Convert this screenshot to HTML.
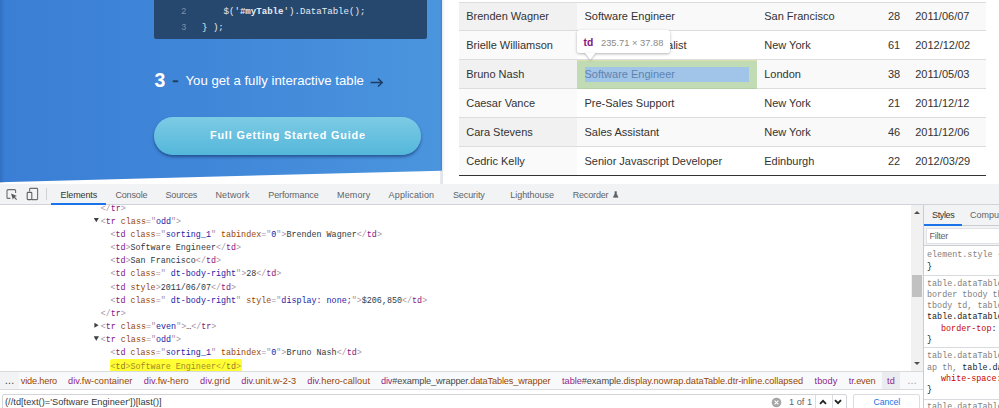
<!DOCTYPE html>
<html lang="en">
<head>
<meta charset="utf-8">
<title>DataTables - DevTools</title>
<style>
*{box-sizing:border-box;margin:0;padding:0}
html,body{width:999px;height:408px;overflow:hidden;background:#fff}
body{position:relative;font-family:"Liberation Sans",sans-serif;color:#333;-webkit-font-smoothing:antialiased}
.abs{position:absolute}
.t{position:absolute;white-space:nowrap;line-height:1}

/* ---------- page (top) ---------- */
#page{position:absolute;left:0;top:0;width:999px;height:184px;overflow:hidden;background:#fff}
#hero{position:absolute;left:0;top:0;width:442px;height:184px;
  background:linear-gradient(90deg,#3a7fd5 0%,#3f85d8 40%,#4b95de 100%);
  clip-path:polygon(0 0,442px 0,442px 170.7px,0 182.2px)}
#heroshadow{position:absolute;left:442px;top:0;width:3px;height:171px;background:linear-gradient(90deg,#e6e9ee 0%,#fff 100%)}
#code{position:absolute;left:154px;top:-10px;width:272.5px;height:49.3px;background:#26486f;border-radius:2px}
.mono{font-family:"Liberation Mono","DejaVu Sans Mono",monospace}
.cl{position:absolute;white-space:pre;font-size:9.1px;line-height:1;color:#e6ebf1}
.ln{color:#7d8fa6}

#step3{left:154.5px;top:71.2px;font-size:19.5px;font-weight:bold;color:#fff}
#dash{left:172.2px;top:70.9px;font-size:19.5px;color:#1d3d66;-webkit-text-stroke:.35px #1d3d66}
#steptxt{left:185.5px;top:73.8px;font-size:13.2px;color:#fff}
#arrow{left:370px;top:76.2px}

#btn{position:absolute;left:154.3px;top:117px;width:267.2px;height:37.5px;border-radius:19px;
  background:linear-gradient(180deg,#7dcbe5 0%,#54b7d9 100%);
  box-shadow:0 2px 3px rgba(15,40,90,.55)}
#btn span{position:absolute;left:0;right:0;top:13px;text-align:center;color:#fff;font-weight:bold;font-size:10.8px;letter-spacing:.85px;line-height:1}

/* table */
#tbl{position:absolute;left:458.5px;top:0;width:527px;height:184px}
.row{position:absolute;left:0;width:527px;height:29px;border-top:1px solid #dddddd}
.row.odd{background:#f9f9f9}
.row.even{background:#fff}
.row .c1{position:absolute;left:0;top:0;width:118px;height:100%}
.row.odd .c1{background:#f1f1f1}
.row.even .c1{background:#fafafa}
.row span{position:absolute;top:9px;font-size:11px;line-height:1;white-space:nowrap;color:#333}
.row.r1 span{top:8px}
.row .a{left:7.7px}.row .b{left:126px}.row .c{left:305.7px}.row .d{right:85.3px}.row .e{left:456.7px}
#tblbot{position:absolute;left:458.5px;top:175px;width:527.5px;height:1px;background:#333}

/* inspect overlay */
#hl{position:absolute;left:577px;top:60.2px;width:180px;height:28.7px;background:rgba(147,196,125,.55)}
#hlc{position:absolute;left:584.5px;top:67px;width:164.5px;height:15.3px;background:#a0c5e8}
#hlt{left:584.5px;top:69px;font-size:11px;color:#5f83b0}
#hlb{position:absolute;left:577px;top:60px;width:180px;height:.8px;background:rgba(255,229,153,.4)}
#tip{position:absolute;left:576.5px;top:30.2px;width:93.2px;height:22.4px;background:#fff;border-radius:2.5px;box-shadow:0 1px 3px rgba(0,0,0,.3)}
#tiparrow{position:absolute;left:584.8px;top:52.4px;width:11px;height:7.4px;filter:drop-shadow(0 1px 1.2px rgba(0,0,0,.28))}
#tiparrow i{display:block;width:100%;height:100%;background:#fff;clip-path:polygon(0 0,100% 0,50% 100%)}
#tip .tg{left:7px;top:8.3px;font-size:10.3px;font-weight:bold;color:#881280}
#tip .dm{left:24.5px;top:8.6px;font-size:9.3px;color:#8a8a8a}

/* ---------- devtools ---------- */
#dt{position:absolute;left:0;top:184.3px;width:999px;height:224px;background:#fff}
#tabs{position:absolute;left:0;top:0;width:999px;height:20.3px;background:#f1f3f4;border-bottom:1px solid #d0d3d7}
#tabs .tb{position:absolute;top:6.3px;font-size:9px;line-height:1;color:#5f6368;white-space:nowrap}
#tabs .tb.sel{color:#333}
#tabsel{position:absolute;left:51px;top:19px;width:55px;height:1.7px;background:#1a73e8}
#tabdiv{position:absolute;left:46px;top:4px;width:1px;height:12px;background:#cfd1d4}

#dom{position:absolute;left:0;top:20.3px;width:911px;height:166.4px;overflow:hidden;background:#fff}
.dl{position:absolute;white-space:pre;font-family:"Liberation Mono","DejaVu Sans Mono",monospace;font-size:8.38px;line-height:13.175px;height:13.175px;color:#303942}
.tg{color:#881280}.an{color:#994500}.av{color:#1a1aa6}.pu{color:#a894a6}
.tri{position:absolute;background:#3c4043}
.tri.dn{width:5.4px;height:4.4px;clip-path:polygon(0 0,100% 0,50% 100%)}
.tri.rt{width:4.2px;height:5.2px;clip-path:polygon(0 0,100% 50%,0 100%)}

#sb{position:absolute;left:910.6px;top:20.3px;width:12.6px;height:166.2px;background:#f1f1f1}
#sbthumb{position:absolute;left:1.6px;top:70.2px;width:9.6px;height:22px;background:#c1c1c1}
#sb .au{position:absolute;left:3.3px;top:6px;width:0;height:0;border-left:3px solid transparent;border-right:3px solid transparent;border-bottom:3.4px solid #505050}
#sb .ad{position:absolute;left:3.3px;top:157.6px;width:0;height:0;border-left:3px solid transparent;border-right:3px solid transparent;border-top:3.4px solid #505050}

#crumbs{position:absolute;left:0;top:186.4px;width:923.6px;height:19.6px;background:#f8f9fa;border-top:1px solid #d8dadd;border-bottom:1px solid #d8dadd;overflow:hidden}
#crumbs .cr{position:absolute;top:5.2px;font-size:9.2px;line-height:1;white-space:nowrap;color:#8e1f88}
#crumbs .cr i{font-style:normal;color:#994500}
#crumbs .cr b{font-weight:normal;color:#44484d}
#crumbs .more{position:absolute;top:0;height:18px;background:#f1f3f4}
#search{position:absolute;left:0;top:206px;width:923.6px;height:19px;background:#fff}
#sinput{position:absolute;left:1.5px;top:3.6px;width:845px;height:18px;border:1px solid #d2d4d8;border-radius:2px;background:#fff}
#cancel{position:absolute;left:853.2px;top:3.6px;width:67px;height:18px;border:1px solid #dadce0;border-radius:2px;background:#fff}

#styles{position:absolute;left:923px;top:20.3px;width:76.6px;height:204px;background:#fff;border-left:1px solid #cbcdd1;overflow:hidden}
#stabs{position:absolute;left:0;top:0;width:76px;height:21.5px;background:#f1f3f4;border-bottom:1px solid #cbcdd1}
#ssel{position:absolute;left:0;top:19.8px;width:38.2px;height:1.7px;background:#1a73e8}
#sfilter{position:absolute;left:0;top:21.5px;width:76px;height:20px;background:#f1f3f4;border-bottom:1px solid #cbcdd1}
#sfilter div{position:absolute;left:2px;top:2px;width:80px;height:16px;background:#fff;border:1px solid #e0e2e5}
.sl{position:absolute;left:3px;white-space:pre;font-family:"Liberation Mono","DejaVu Sans Mono",monospace;font-size:8.42px;line-height:11.2px;height:11.2px;color:#808080}
.sl.k{color:#202124}
.sl .pr{color:#c80000}
.ssep{position:absolute;left:0;width:76px;height:1px;background:#d8dadd}
</style>
</head>
<body>

<!-- ================= PAGE ================= -->
<div id="page">
  <div id="hero"></div>
  <div id="heroshadow"></div>
  <div class="abs" style="left:0;top:0;width:5px;height:183px;background:linear-gradient(90deg,rgba(10,30,90,.16),rgba(10,30,90,0))"></div>
  <div class="abs" style="left:439.5px;top:0;width:2.5px;height:171px;background:linear-gradient(90deg,rgba(10,40,100,0),rgba(10,40,100,.16))"></div>
  <div class="abs" style="left:440px;top:171px;width:2.6px;height:13.5px;background:linear-gradient(90deg,#e9ebee,#dfe2e6)"></div>
  <div id="code"></div>
  <div class="cl mono" style="left:181.1px;top:6.9px"><span class="ln">2</span></div>
  <div class="cl mono" style="left:223.5px;top:6.9px">$('<b>#myTable</b>').DataTable();</div>
  <div class="cl mono" style="left:181.1px;top:22.9px"><span class="ln">3</span></div>
  <div class="cl mono" style="left:202px;top:22.9px">} );</div>

  <div class="t" id="step3">3</div>
  <div class="t" id="dash">-</div>
  <div class="t" id="steptxt">You get a fully interactive table</div>
  <svg class="abs" id="arrow" width="14" height="12" viewBox="0 0 14 12"><path d="M0.6 6.5 H12 M8 2.5 L12.2 6.5 L8 10.5" fill="none" stroke="#1d3d66" stroke-width="1.5"/></svg>

  <div id="btn"><span>Full Getting Started Guide</span></div>

  <div id="tbl">
    <div class="row odd r1" style="top:2px"><div class="c1"></div><span class="a">Brenden Wagner</span><span class="b">Software Engineer</span><span class="c">San Francisco</span><span class="d">28</span><span class="e">2011/06/07</span></div>
    <div class="row even" style="top:30px"><div class="c1"></div><span class="a">Brielle Williamson</span><span class="b">Integration Specialist</span><span class="c">New York</span><span class="d">61</span><span class="e">2012/12/02</span></div>
    <div class="row odd" style="top:59px"><div class="c1"></div><span class="a">Bruno Nash</span><span class="b">Software Engineer</span><span class="c">London</span><span class="d">38</span><span class="e">2011/05/03</span></div>
    <div class="row even" style="top:88px"><div class="c1"></div><span class="a">Caesar Vance</span><span class="b">Pre-Sales Support</span><span class="c">New York</span><span class="d">21</span><span class="e">2011/12/12</span></div>
    <div class="row odd" style="top:117px"><div class="c1"></div><span class="a">Cara Stevens</span><span class="b">Sales Assistant</span><span class="c">New York</span><span class="d">46</span><span class="e">2011/12/06</span></div>
    <div class="row even" style="top:146px"><div class="c1"></div><span class="a">Cedric Kelly</span><span class="b">Senior Javascript Developer</span><span class="c">Edinburgh</span><span class="d">22</span><span class="e">2012/03/29</span></div>
  </div>
  <div id="tblbot"></div>

  <div id="hl"></div><div id="hlb"></div><div id="hlc"></div><div class="t" id="hlt">Software Engineer</div>
  <div id="tip"><span class="t tg">td</span><span class="t dm">235.71 × 37.88</span></div>
  <div id="tiparrow"><i></i></div>
</div>

<!-- ================= DEVTOOLS ================= -->
<div id="dt">
  <div id="tabs">
    <svg class="abs" style="left:6px;top:3.5px" width="13" height="14" viewBox="0 0 13 14"><path d="M9.6 5 V2.6 Q9.6 1.6 8.6 1.6 H2 Q1 1.6 1 2.6 V9.4 Q1 10.4 2 10.4 H4.4" fill="none" stroke="#6a6d71" stroke-width="1.1"/><path d="M5 5.6 L11 8 L8.7 8.8 L11 11.2 L10.2 12 L7.9 9.6 L6.9 11.7 Z" fill="#55585c"/></svg>
    <svg class="abs" style="left:26px;top:3px" width="13" height="14" viewBox="0 0 13 14"><path d="M3.6 4.6 V2.2 Q3.6 1.4 4.4 1.4 H10.8 Q11.6 1.4 11.6 2.2 V11.8 Q11.6 12.6 10.8 12.6 H6" fill="none" stroke="#6a6d71" stroke-width="1.1"/><rect x="1.2" y="5.4" width="4.6" height="7.2" rx=".8" fill="none" stroke="#5f6266" stroke-width="1.1"/></svg>
    <div id="tabdiv"></div>
    <span class="tb sel" style="left:60.6px;letter-spacing:-0.133px">Elements</span>
    <span class="tb" style="left:115.4px;letter-spacing:-0.138px">Console</span>
    <span class="tb" style="left:165.6px;letter-spacing:-0.224px">Sources</span>
    <span class="tb" style="left:215.4px;letter-spacing:0.176px">Network</span>
    <span class="tb" style="left:268.3px;letter-spacing:-0.114px">Performance</span>
    <span class="tb" style="left:337.0px;letter-spacing:0.137px">Memory</span>
    <span class="tb" style="left:388.6px;letter-spacing:0.143px">Application</span>
    <span class="tb" style="left:452.9px;letter-spacing:-0.085px">Security</span>
    <span class="tb" style="left:510.2px;letter-spacing:-0.022px">Lighthouse</span>
    <span class="tb" style="left:572.7px;letter-spacing:-0.160px">Recorder</span>
    <svg class="abs" style="left:612.3px;top:6.6px" width="7.4" height="7.4" viewBox="0 0 8 10"><path d="M2.6 0.8 H5.4 M3 1 V3.8 L0.8 8.6 H7.2 L5 3.8 V1" fill="#5f6368" stroke="#5f6368" stroke-width=".8" stroke-linejoin="round"/></svg>
    <div id="tabsel"></div>
  </div>

  <div id="dom">
    <div class="dl" style="left:100.7px;top:-2.09px"><span class="pu">&lt;/</span><span class="tg">tr</span><span class="pu">&gt;</span></div>
    <div class="tri dn" style="left:93.6px;top:13.18px"></div>
    <div class="dl" style="left:100.7px;top:11.09px"><span class="pu">&lt;</span><span class="tg">tr</span> <span class="an">class</span><span class="pu">="</span><span class="av">odd</span><span class="pu">"&gt;</span></div>
    <div class="dl" style="left:110.4px;top:24.26px"><span class="pu">&lt;</span><span class="tg">td</span> <span class="an">class</span><span class="pu">="</span><span class="av">sorting_1</span><span class="pu">"</span> <span class="an">tabindex</span><span class="pu">="</span><span class="av">0</span><span class="pu">"</span><span class="pu">&gt;</span>Brenden Wagner<span class="pu">&lt;/</span><span class="tg">td</span><span class="pu">&gt;</span></div>
    <div class="dl" style="left:110.4px;top:37.44px"><span class="pu">&lt;</span><span class="tg">td</span><span class="pu">&gt;</span>Software Engineer<span class="pu">&lt;/</span><span class="tg">td</span><span class="pu">&gt;</span></div>
    <div class="dl" style="left:110.4px;top:50.61px"><span class="pu">&lt;</span><span class="tg">td</span><span class="pu">&gt;</span>San Francisco<span class="pu">&lt;/</span><span class="tg">td</span><span class="pu">&gt;</span></div>
    <div class="dl" style="left:110.4px;top:63.79px"><span class="pu">&lt;</span><span class="tg">td</span> <span class="an">class</span><span class="pu">="</span><span class="av"> dt-body-right</span><span class="pu">"</span><span class="pu">&gt;</span>28<span class="pu">&lt;/</span><span class="tg">td</span><span class="pu">&gt;</span></div>
    <div class="dl" style="left:110.4px;top:76.96px"><span class="pu">&lt;</span><span class="tg">td</span> <span class="an">style</span><span class="pu">&gt;</span>2011/06/07<span class="pu">&lt;/</span><span class="tg">td</span><span class="pu">&gt;</span></div>
    <div class="dl" style="left:110.4px;top:90.14px"><span class="pu">&lt;</span><span class="tg">td</span> <span class="an">class</span><span class="pu">="</span><span class="av"> dt-body-right</span><span class="pu">"</span> <span class="an">style</span><span class="pu">="</span><span class="av">display: none;</span><span class="pu">"</span><span class="pu">&gt;</span>$206,850<span class="pu">&lt;/</span><span class="tg">td</span><span class="pu">&gt;</span></div>
    <div class="dl" style="left:100.7px;top:103.31px"><span class="pu">&lt;/</span><span class="tg">tr</span><span class="pu">&gt;</span></div>
    <div class="tri rt" style="left:94.4px;top:118.08px"></div>
    <div class="dl" style="left:100.7px;top:116.49px"><span class="pu">&lt;</span><span class="tg">tr</span> <span class="an">class</span><span class="pu">="</span><span class="av">even</span><span class="pu">"&gt;</span>…<span class="pu">&lt;/</span><span class="tg">tr</span><span class="pu">&gt;</span></div>
    <div class="tri dn" style="left:93.6px;top:131.75px"></div>
    <div class="dl" style="left:100.7px;top:129.66px"><span class="pu">&lt;</span><span class="tg">tr</span> <span class="an">class</span><span class="pu">="</span><span class="av">odd</span><span class="pu">"&gt;</span></div>
    <div class="dl" style="left:110.4px;top:142.84px"><span class="pu">&lt;</span><span class="tg">td</span> <span class="an">class</span><span class="pu">="</span><span class="av">sorting_1</span><span class="pu">"</span> <span class="an">tabindex</span><span class="pu">="</span><span class="av">0</span><span class="pu">"</span><span class="pu">&gt;</span>Bruno Nash<span class="pu">&lt;/</span><span class="tg">td</span><span class="pu">&gt;</span></div>
    <div class="abs" style="left:110px;top:154.8px;width:132.2px;height:14px;border-radius:1.5px;background:#ffff33"></div>
    <div class="dl" style="left:110.4px;top:156.01px;color:#a08a2a"><span style="color:#b3a03a">&lt;</span><span style="color:#a0702a">td</span><span style="color:#b3a03a">&gt;</span>Software Engineer<span style="color:#b3a03a">&lt;/</span><span style="color:#a0702a">td</span><span style="color:#b3a03a">&gt;</span></div>
  </div>

  <div id="sb"><div class="au"></div><div id="sbthumb"></div><div class="ad"></div></div>

  <div id="crumbs">
    <div class="more" style="left:0;width:19px"></div>
    <span class="cr" style="left:4.5px;top:4.5px;color:#333;font-size:10px">…</span>
    <span class="cr" style="left:20.8px;letter-spacing:-0.172px"><i>vide.hero</i></span>
    <span class="cr" style="left:68.0px;letter-spacing:0.050px">div<i>.fw-container</i></span>
    <span class="cr" style="left:143.8px;letter-spacing:0.064px">div<i>.fw-hero</i></span>
    <span class="cr" style="left:200.0px;letter-spacing:0.150px">div<i>.grid</i></span>
    <span class="cr" style="left:241.2px;letter-spacing:0.079px">div<i>.unit.w-2-3</i></span>
    <span class="cr" style="left:307.3px;letter-spacing:0.069px">div<i>.hero-callout</i></span>
    <span class="cr" style="left:381.0px;letter-spacing:-0.139px">div<b>#example_wrapper</b><i>.dataTables_wrapper</i></span>
    <span class="cr" style="left:562.1px;letter-spacing:-0.061px">table<b>#example</b><i>.display.nowrap.dataTable.dtr-inline.collapsed</i></span>
    <span class="cr" style="left:814.5px;letter-spacing:0.100px">tbody</span>
    <span class="cr" style="left:848.8px;letter-spacing:-0.114px">tr<i>.even</i></span>
    <div class="more" style="left:881.8px;width:18.5px;background:#eaecef"></div>
    <span class="cr" style="left:887.1px;letter-spacing:0.000px">td</span>
    <span class="cr" style="left:907px;top:4.5px;color:#9aa0a6;font-size:10px">…</span>
  </div>

  <div id="search">
    <div id="sinput"></div>
    <span class="t" style="left:5px;top:8px;font-size:9.2px;letter-spacing:.04px;color:#303942">(//td[text()='Software Engineer'])[last()]</span>
    <svg class="abs" style="left:771.3px;top:6.4px" width="11" height="11" viewBox="0 0 11 11"><circle cx="5.5" cy="5.5" r="4.8" fill="#a6a6a6"/><path d="M3.6 3.6 L7.4 7.4 M7.4 3.6 L3.6 7.4" stroke="#fff" stroke-width="1.1"/></svg>
    <span class="t" style="left:789px;top:8px;font-size:9.2px;color:#5f6368">1 of 1</span>
    <div class="abs" style="left:814.6px;top:4.6px;width:1px;height:16px;background:#dadce0"></div>
    <svg class="abs" style="left:818.6px;top:8.6px" width="8" height="6" viewBox="0 0 8 6"><path d="M1 4.8 L4 1.8 L7 4.8" fill="none" stroke="#202124" stroke-width="1.8"/></svg>
    <div class="abs" style="left:831.6px;top:4.6px;width:1px;height:16px;background:#dadce0"></div>
    <svg class="abs" style="left:833.6px;top:8.6px" width="8" height="6" viewBox="0 0 8 6"><path d="M1 1.2 L4 4.2 L7 1.2" fill="none" stroke="#202124" stroke-width="1.8"/></svg>
    <div id="cancel"></div>
    <span class="t" style="left:873.6px;top:8px;font-size:8.7px;letter-spacing:-.1px;color:#1a73e8">Cancel</span>
  </div>

  <div id="styles">
    <div id="stabs">
      <span class="t" style="left:8px;top:6.6px;font-size:9px;letter-spacing:-.35px;color:#333">Styles</span>
      <span class="t" style="left:46px;top:6.6px;font-size:9px;color:#5f6368">Computed</span>
      <div id="ssel"></div>
    </div>
    <div id="sfilter"><div></div><span class="t" style="left:5.6px;top:6.2px;font-size:9px;letter-spacing:-.25px;color:#5f6368">Filter</span></div>
    <div class="sl" style="top:45.0px">element.style {</div>
    <div class="sl k" style="top:57.3px">}</div>
    <div class="ssep" style="top:70.4px"></div>
    <div class="sl" style="top:74.5px">table.dataTable.cell-</div>
    <div class="sl" style="top:85.3px">border tbody th, table</div>
    <div class="sl" style="top:96.1px">tbody td, table.dataTa</div>
    <div class="sl k" style="top:107.4px">table.dataTable.display</div>
    <div class="sl k" style="top:119.4px;left:17px"><span class="pr">border-top</span>: 1px solid</div>
    <div class="sl k" style="top:130.2px">}</div>
    <div class="ssep" style="top:142.8px"></div>
    <div class="sl" style="top:146.8px">table.dataTable.nowr</div>
    <div class="sl" style="top:158.1px">ap th, <span style="color:#202124">table.dataTab</span></div>
    <div class="sl k" style="top:169.9px;left:17px"><span class="pr">white-space</span>: nowrap</div>
    <div class="sl k" style="top:180.7px">}</div>
    <div class="ssep" style="top:194.2px"></div>
    <div class="sl" style="top:197.2px">table.dataTable.display</div>
  </div>
</div>

</body>
</html>
